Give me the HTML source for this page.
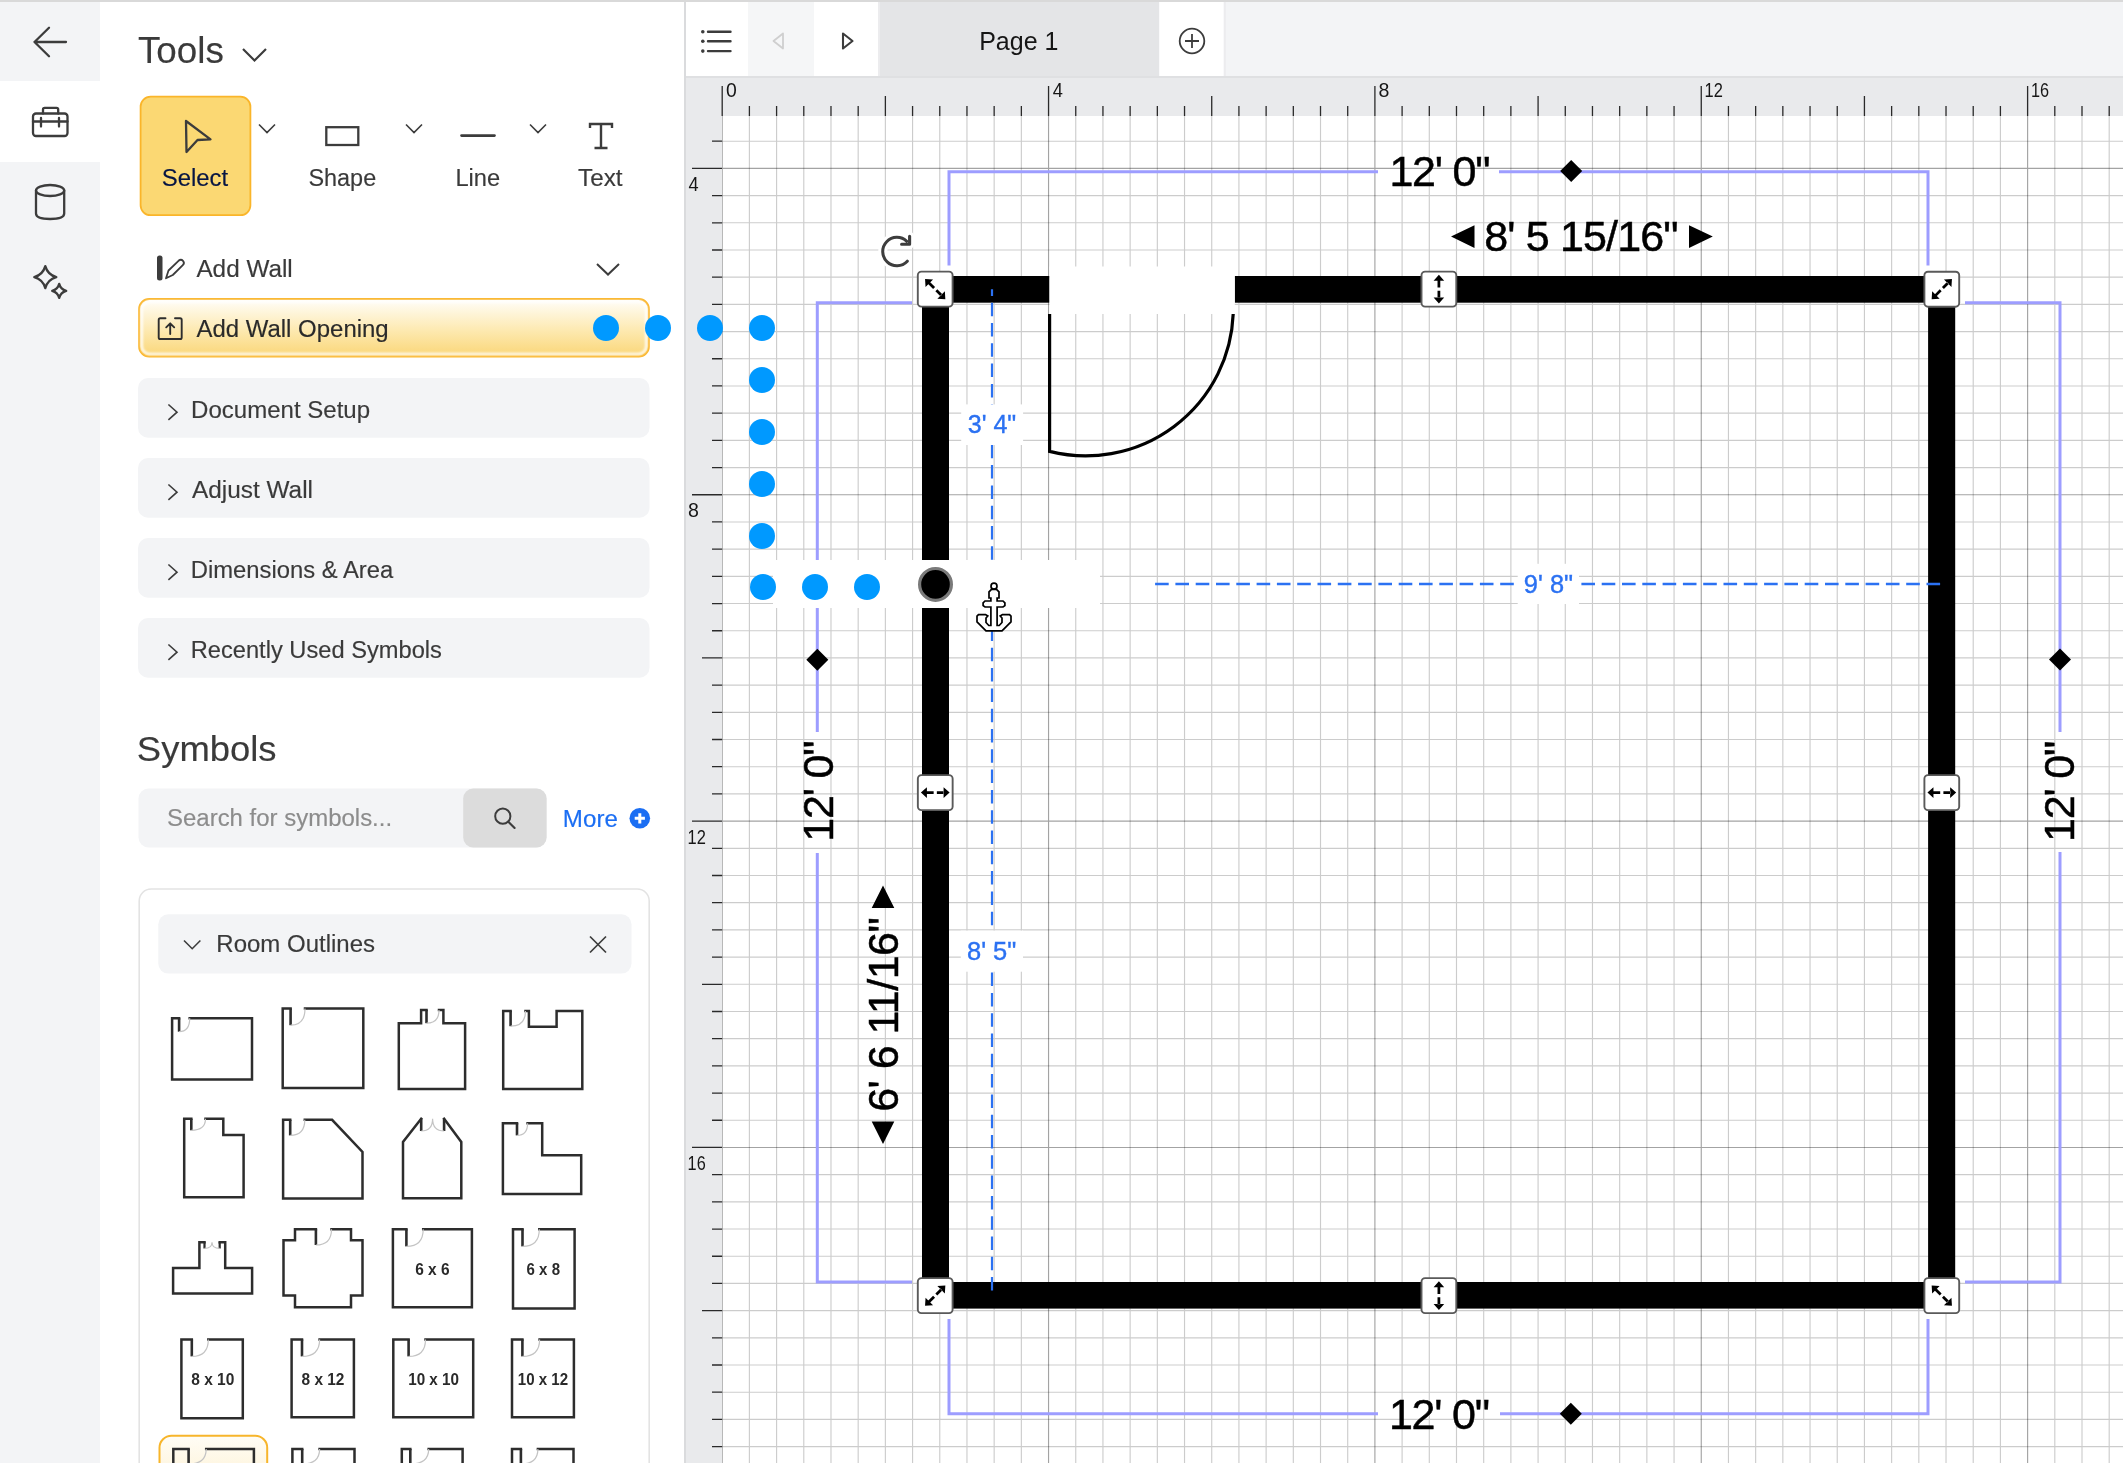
<!DOCTYPE html>
<html><head><meta charset="utf-8"><title>Floor plan editor</title>
<style>
html,body{margin:0;padding:0;background:#fff;overflow:hidden;}
body{width:2123px;height:1463px;position:relative;font-family:"Liberation Sans", sans-serif;}
svg{position:absolute;left:0;top:0;display:block;will-change:transform;}
text{font-family:"Liberation Sans", sans-serif;}
</style></head><body>
<svg width="2123" height="1463" viewBox="0 0 2123 1463">
<defs>
<linearGradient id="gOpen" x1="0" y1="0" x2="0" y2="1">
<stop offset="0" stop-color="#fffefa"/><stop offset="0.55" stop-color="#fde9b0"/><stop offset="1" stop-color="#fad677"/>
</linearGradient>
<linearGradient id="gSel" x1="0" y1="0" x2="0" y2="1">
<stop offset="0" stop-color="#fffdf6"/><stop offset="1" stop-color="#fdebc0"/>
</linearGradient>
<filter id="fBlur" x="-5%" y="-20%" width="110%" height="140%"><feGaussianBlur stdDeviation="1"/></filter>
</defs>

<rect x="686" y="116" width="1437" height="1347" fill="#ffffff"/>
<path d="M749.40 116V1463M776.59 116V1463M803.79 116V1463M830.98 116V1463M858.18 116V1463M885.38 116V1463M912.57 116V1463M939.77 116V1463M966.96 116V1463M994.16 116V1463M1021.36 116V1463M1075.75 116V1463M1102.94 116V1463M1130.14 116V1463M1157.34 116V1463M1184.53 116V1463M1211.73 116V1463M1238.92 116V1463M1266.12 116V1463M1293.32 116V1463M1320.51 116V1463M1347.71 116V1463M1402.10 116V1463M1429.30 116V1463M1456.49 116V1463M1483.69 116V1463M1510.88 116V1463M1538.08 116V1463M1565.28 116V1463M1592.47 116V1463M1619.67 116V1463M1646.86 116V1463M1674.06 116V1463M1728.45 116V1463M1755.65 116V1463M1782.84 116V1463M1810.04 116V1463M1837.24 116V1463M1864.43 116V1463M1891.63 116V1463M1918.82 116V1463M1946.02 116V1463M1973.22 116V1463M2000.41 116V1463M2054.80 116V1463M2082.00 116V1463M2109.20 116V1463M722 141.20H2123M722 195.60H2123M722 222.79H2123M722 249.99H2123M722 277.18H2123M722 304.38H2123M722 331.58H2123M722 358.77H2123M722 385.97H2123M722 413.16H2123M722 440.36H2123M722 467.56H2123M722 521.95H2123M722 549.14H2123M722 576.34H2123M722 603.54H2123M722 630.73H2123M722 657.93H2123M722 685.12H2123M722 712.32H2123M722 739.52H2123M722 766.71H2123M722 793.91H2123M722 848.30H2123M722 875.50H2123M722 902.69H2123M722 929.89H2123M722 957.08H2123M722 984.28H2123M722 1011.48H2123M722 1038.67H2123M722 1065.87H2123M722 1093.06H2123M722 1120.26H2123M722 1174.65H2123M722 1201.85H2123M722 1229.04H2123M722 1256.24H2123M722 1283.44H2123M722 1310.63H2123M722 1337.83H2123M722 1365.02H2123M722 1392.22H2123M722 1419.42H2123M722 1446.61H2123" stroke="rgba(0,0,0,0.2)" stroke-width="1.15" fill="none"/>
<path d="M722.20 116V1463M1048.55 116V1463M1374.90 116V1463M1701.26 116V1463M2027.61 116V1463M722 168.40H2123M722 494.75H2123M722 821.10H2123M722 1147.46H2123" stroke="rgba(0,0,0,0.36)" stroke-width="1.15" fill="none"/>
<rect x="686" y="76" width="1437" height="40" fill="#e9eaec"/>
<rect x="686" y="76" width="36" height="1387" fill="#e9eaec"/>
<rect x="686" y="76" width="1437" height="2" fill="#dfe0e2"/>
<path d="M722.20 86V116M749.40 106V116M776.59 106V116M803.79 106V116M830.98 106V116M858.18 106V116M885.38 96V116M912.57 106V116M939.77 106V116M966.96 106V116M994.16 106V116M1021.36 106V116M1048.55 86V116M1075.75 106V116M1102.94 106V116M1130.14 106V116M1157.34 106V116M1184.53 106V116M1211.73 96V116M1238.92 106V116M1266.12 106V116M1293.32 106V116M1320.51 106V116M1347.71 106V116M1374.90 86V116M1402.10 106V116M1429.30 106V116M1456.49 106V116M1483.69 106V116M1510.88 106V116M1538.08 96V116M1565.28 106V116M1592.47 106V116M1619.67 106V116M1646.86 106V116M1674.06 106V116M1701.26 86V116M1728.45 106V116M1755.65 106V116M1782.84 106V116M1810.04 106V116M1837.24 106V116M1864.43 96V116M1891.63 106V116M1918.82 106V116M1946.02 106V116M1973.22 106V116M2000.41 106V116M2027.61 86V116M2054.80 106V116M2082.00 106V116M2109.20 106V116M712 141.20H722M692 168.40H722M712 195.60H722M712 222.79H722M712 249.99H722M712 277.18H722M712 304.38H722M702 331.58H722M712 358.77H722M712 385.97H722M712 413.16H722M712 440.36H722M712 467.56H722M692 494.75H722M712 521.95H722M712 549.14H722M712 576.34H722M712 603.54H722M712 630.73H722M702 657.93H722M712 685.12H722M712 712.32H722M712 739.52H722M712 766.71H722M712 793.91H722M692 821.10H722M712 848.30H722M712 875.50H722M712 902.69H722M712 929.89H722M712 957.08H722M702 984.28H722M712 1011.48H722M712 1038.67H722M712 1065.87H722M712 1093.06H722M712 1120.26H722M692 1147.46H722M712 1174.65H722M712 1201.85H722M712 1229.04H722M712 1256.24H722M712 1283.44H722M702 1310.63H722M712 1337.83H722M712 1365.02H722M712 1392.22H722M712 1419.42H722M712 1446.61H722" stroke="#2a2a2a" stroke-width="1.3" fill="none"/>
<text x="725.92" y="97.1" font-size="20" fill="#161616" textLength="10.78" lengthAdjust="spacingAndGlyphs">0</text>
<text x="1052.69" y="97.1" font-size="20" fill="#161616" textLength="10.14" lengthAdjust="spacingAndGlyphs">4</text>
<text x="1378.62" y="97.1" font-size="20" fill="#161616" textLength="10.89" lengthAdjust="spacingAndGlyphs">8</text>
<text x="1704.52" y="97.1" font-size="20" fill="#161616" textLength="18.29" lengthAdjust="spacingAndGlyphs">12</text>
<text x="2030.89" y="97.1" font-size="20" fill="#161616" textLength="18.11" lengthAdjust="spacingAndGlyphs">16</text>
<text x="688.44" y="190.9" font-size="20" fill="#161616" textLength="10.14" lengthAdjust="spacingAndGlyphs">4</text>
<text x="688.02" y="517.3" font-size="20" fill="#161616" textLength="10.89" lengthAdjust="spacingAndGlyphs">8</text>
<text x="687.57" y="843.6" font-size="20" fill="#161616" textLength="18.29" lengthAdjust="spacingAndGlyphs">12</text>
<text x="687.58" y="1170.0" font-size="20" fill="#161616" textLength="18.11" lengthAdjust="spacingAndGlyphs">16</text>
<rect x="686" y="0" width="1437" height="76" fill="#f3f4f6"/>
<rect x="686" y="0" width="62" height="76" fill="#ffffff"/>
<rect x="748" y="0" width="66" height="76" fill="#f5f6f7"/>
<rect x="814" y="0" width="64" height="76" fill="#ffffff"/>
<rect x="878" y="0" width="2" height="76" fill="#ececee"/>
<rect x="880" y="0" width="279.3" height="76" fill="#e4e5e7"/>
<rect x="1159.3" y="0" width="64.5" height="76" fill="#ffffff"/>
<rect x="1223.8" y="0" width="2" height="76" fill="#ececee"/>
<g fill="#3c3c3c"><circle cx="702.8" cy="31.7" r="1.8"/><circle cx="702.8" cy="41.3" r="1.8"/><circle cx="702.8" cy="51.1" r="1.8"/></g>
<path d="M708 31.7H730.5M708 41.3H730.5M708 51.1H730.5" stroke="#3c3c3c" stroke-width="2.4" stroke-linecap="round"/>
<path d="M783 33.5L773.5 41L783 48.5Z" fill="none" stroke="#cfcfcf" stroke-width="1.8" stroke-linejoin="round"/>
<path d="M843 33.5L852.5 41L843 48.5Z" fill="none" stroke="#3c3c3c" stroke-width="2.1" stroke-linejoin="round"/>
<text x="979.2" y="50.2" font-size="26.5" fill="#161616" textLength="79.21" lengthAdjust="spacingAndGlyphs">Page 1</text>
<circle cx="1192" cy="41" r="12.3" fill="none" stroke="#3c3c3c" stroke-width="1.8"/>
<path d="M1192 34V48M1185 41H1199" stroke="#3c3c3c" stroke-width="1.8"/>
<rect x="0" y="0" width="2123" height="2" fill="#d9d9d9"/>
<rect x="684" y="2" width="2" height="1463" fill="#dadbdd"/>
<g fill="#000">
<rect x="922" y="276" width="127.5" height="26.7"/>
<rect x="1234.75" y="276" width="720.45" height="26.7"/>
<rect x="922" y="276" width="27" height="284"/>
<rect x="922" y="608" width="27" height="700.6"/>
<rect x="1928.1" y="276" width="27.1" height="1032.6"/>
<rect x="922" y="1282" width="1033.2" height="26.6"/>
</g>
<rect x="1049.5" y="266.5" width="185.25" height="47.5" fill="#fff"/>
<rect x="773" y="560" width="327" height="48" fill="#fff"/>
<path d="M1049.6 314V451.4A147.7 147.7 0 0 0 1233.2 314" fill="none" stroke="#000" stroke-width="3.2"/>
<g fill="none" stroke="#9d9dff" stroke-width="3">
<path d="M949 265.5V171.7H1378M1499 171.7H1928V265.5"/>
<path d="M912 302.7H817.3V560M817.3 608V732M817.3 853V1282H912"/>
<path d="M1965 302.7H2060V732M2060 852V1282H1965"/>
<path d="M949 1319V1413.7H1378M1500 1413.7H1928V1319"/>
</g>
<path d="M1571.2 160.1L1582.2 171.1L1571.2 182.1L1560.2 171.1Z" fill="#000"/>
<path d="M817.3 648.8L828.3 659.8L817.3 670.8L806.3 659.8Z" fill="#000"/>
<path d="M2060 648.6L2071 659.6L2060 670.6L2049 659.6Z" fill="#000"/>
<path d="M1570.8 1402.7L1581.8 1413.7L1570.8 1424.7L1559.8 1413.7Z" fill="#000"/>
<path d="M992 289.3V1291.5" stroke="#2b71f2" stroke-width="2.2" stroke-dasharray="13.5 6.8" stroke-dashoffset="6.9" fill="none"/>
<path d="M1155.1 584H1941.3" stroke="#2b71f2" stroke-width="2.4" stroke-dasharray="13.6 6.7" fill="none"/>
<rect x="960" y="560" width="140" height="48" fill="#fff"/>
<rect x="961.2" y="404.4" width="61.9" height="40.6" fill="#fff"/>
<rect x="960.8" y="930.6" width="62.2" height="41.1" fill="#fff"/>
<rect x="1517.7" y="563.8" width="61.3" height="40.2" fill="#fff"/>
<text x="967.72" y="432.9" font-size="25.6" fill="#2b71f2" stroke="#2b71f2" stroke-width="0.4" textLength="48.51" lengthAdjust="spacingAndGlyphs">3' 4"</text>
<text x="966.98" y="960.2" font-size="25.6" fill="#2b71f2" stroke="#2b71f2" stroke-width="0.4" textLength="49.37" lengthAdjust="spacingAndGlyphs">8' 5"</text>
<text x="1523.86" y="593.0" font-size="25.6" fill="#2b71f2" stroke="#2b71f2" stroke-width="0.4" textLength="49.19" lengthAdjust="spacingAndGlyphs">9' 8"</text>
<g font-size="43" fill="#000" stroke="#000" stroke-width="0.5" text-anchor="middle" lengthAdjust="spacingAndGlyphs">
<text x="1440" y="186" textLength="101.2">12' 0"</text>
<text x="1439.5" y="1428.5" textLength="101.2">12' 0"</text>
<text x="1581.4" y="251.1" textLength="194.3">8' 5 15/16"</text>
<text transform="translate(833.3 791.2) rotate(-90)" textLength="101.2">12' 0"</text>
<text transform="translate(2074.4 791.3) rotate(-90)" textLength="101.2">12' 0"</text>
<text transform="translate(898.2 1014.5) rotate(-90)" textLength="194.6">6' 6 11/16"</text>
</g>
<path d="M1451 236.6L1474.5 225.3V248Z M1689 225.3L1712.8 236.6L1689 248Z M883 885.4L894.3 908H871.7Z M871.7 1121.5H894.3L883 1144Z" fill="#000"/>
<rect x="917.8000000000001" y="271.6" width="34.8" height="35" rx="3.6" fill="#fff" stroke="#5a5a5a" stroke-width="1.9"/>
<g transform="translate(935.2 289.1) rotate(45)"><path d="M-14.35 0L-8.35 -5.3V5.3Z M14.35 0L8.35 -5.3V5.3Z M-8.7 -1.38H-1.6V1.38H-8.7Z M1.6 -1.38H8.7V1.38H1.6Z" fill="#000"/></g>
<rect x="1421.5" y="271.6" width="34.8" height="35" rx="3.6" fill="#fff" stroke="#5a5a5a" stroke-width="1.9"/>
<g transform="translate(1438.9 289.1) rotate(90)"><path d="M-14.35 0L-8.35 -5.3V5.3Z M14.35 0L8.35 -5.3V5.3Z M-8.7 -1.38H-1.6V1.38H-8.7Z M1.6 -1.38H8.7V1.38H1.6Z" fill="#000"/></g>
<rect x="1924.3999999999999" y="271.7" width="34.8" height="35" rx="3.6" fill="#fff" stroke="#5a5a5a" stroke-width="1.9"/>
<g transform="translate(1941.8 289.2) rotate(-45)"><path d="M-14.35 0L-8.35 -5.3V5.3Z M14.35 0L8.35 -5.3V5.3Z M-8.7 -1.38H-1.6V1.38H-8.7Z M1.6 -1.38H8.7V1.38H1.6Z" fill="#000"/></g>
<rect x="917.85" y="775.1" width="34.8" height="35" rx="3.6" fill="#fff" stroke="#5a5a5a" stroke-width="1.9"/>
<g transform="translate(935.25 792.6) rotate(0)"><path d="M-14.35 0L-8.35 -5.3V5.3Z M14.35 0L8.35 -5.3V5.3Z M-8.7 -1.38H-1.6V1.38H-8.7Z M1.6 -1.38H8.7V1.38H1.6Z" fill="#000"/></g>
<rect x="1924.3999999999999" y="775.1" width="34.8" height="35" rx="3.6" fill="#fff" stroke="#5a5a5a" stroke-width="1.9"/>
<g transform="translate(1941.8 792.6) rotate(0)"><path d="M-14.35 0L-8.35 -5.3V5.3Z M14.35 0L8.35 -5.3V5.3Z M-8.7 -1.38H-1.6V1.38H-8.7Z M1.6 -1.38H8.7V1.38H1.6Z" fill="#000"/></g>
<rect x="917.8000000000001" y="1278.1" width="34.8" height="35" rx="3.6" fill="#fff" stroke="#5a5a5a" stroke-width="1.9"/>
<g transform="translate(935.2 1295.6) rotate(-45)"><path d="M-14.35 0L-8.35 -5.3V5.3Z M14.35 0L8.35 -5.3V5.3Z M-8.7 -1.38H-1.6V1.38H-8.7Z M1.6 -1.38H8.7V1.38H1.6Z" fill="#000"/></g>
<rect x="1421.5" y="1278.1" width="34.8" height="35" rx="3.6" fill="#fff" stroke="#5a5a5a" stroke-width="1.9"/>
<g transform="translate(1438.9 1295.6) rotate(90)"><path d="M-14.35 0L-8.35 -5.3V5.3Z M14.35 0L8.35 -5.3V5.3Z M-8.7 -1.38H-1.6V1.38H-8.7Z M1.6 -1.38H8.7V1.38H1.6Z" fill="#000"/></g>
<rect x="1924.3999999999999" y="1278.1" width="34.8" height="35" rx="3.6" fill="#fff" stroke="#5a5a5a" stroke-width="1.9"/>
<g transform="translate(1941.8 1295.6) rotate(45)"><path d="M-14.35 0L-8.35 -5.3V5.3Z M14.35 0L8.35 -5.3V5.3Z M-8.7 -1.38H-1.6V1.38H-8.7Z M1.6 -1.38H8.7V1.38H1.6Z" fill="#000"/></g>
<path d="M907.3 261.2A14.2 14.2 0 1 1 906.8 241.3M909.6 236.2V244.2H901.6" fill="none" stroke="#fff" stroke-width="9" stroke-linecap="round" stroke-linejoin="round"/>
<path d="M907.3 261.2A14.2 14.2 0 1 1 906.8 241.3" fill="none" stroke="#3d3d3d" stroke-width="3" stroke-linecap="round"/>
<path d="M909.6 236.2V244.2H901.6" fill="none" stroke="#3d3d3d" stroke-width="3.1" stroke-linecap="round" stroke-linejoin="round"/>
<g fill="#fff" stroke="#000" stroke-width="1.7" stroke-linejoin="miter">
<circle cx="994" cy="586.2" r="3"/>
<path d="M994 589.3L991.5 589.3L989 591.8L989 598L990.9 598L990.9 601L985 601L983.1 602.9L983.1 605.5L985 607L990.9 607L990.9 625.5L988.8 625.5L986 622.5L986 618L987.8 616L985.5 614.6L978.5 614.6L977 616.2L977 621.8L986 630.8L1002 630.8L1011 621.8L1011 616.2L1009.5 614.6L1002.5 614.6L1000.2 616L1002 618L1002 622.5L999.2 625.5L997.1 625.5L997.1 607L1003 607L1004.9 605.5L1004.9 602.9L1003 601L997.1 601L997.1 598L999 598L999 591.8L996.5 589.3Z"/>
</g>
<rect x="0" y="2" width="100" height="1461" fill="#f3f4f6"/>
<rect x="0" y="81" width="100" height="81" fill="#ffffff"/>
<g fill="none" stroke="#3c3c3c" stroke-width="2.3" stroke-linecap="round" stroke-linejoin="round">
<path d="M34.5 42H66M34.5 42L49 27.8M34.5 42L49 56.2"/>
<rect x="33" y="113.5" width="34.5" height="22.5" rx="3"/><path d="M43 113.5V109.5Q43 107.8 44.7 107.8H56.5Q58.2 107.8 58.2 109.5V113.5M33 121.5H67.5M41 118V126.5M59 118V126.5"/>
<ellipse cx="50.1" cy="190.5" rx="14.1" ry="5.5"/><path d="M36 190.5V213.5Q36 219 50.1 219Q64.2 219 64.2 213.5V190.5"/>
<path d="M45.3 266.1Q47.699999999999996 274.70000000000005 56.3 277.1Q47.699999999999996 279.5 45.3 288.1Q42.9 279.5 34.3 277.1Q42.9 274.70000000000005 45.3 266.1Z"/>
<path d="M59.2 283.9Q60.7 289.4 66.2 290.9Q60.7 292.4 59.2 297.9Q57.7 292.4 52.2 290.9Q57.7 289.4 59.2 283.9Z"/>
</g>
<text x="137.96" y="63" font-size="36.5" fill="#3a3a3a" stroke="#3a3a3a" stroke-width="0.15" textLength="85.91" lengthAdjust="spacingAndGlyphs" >Tools</text>
<path d="M243 49L254.5 60.5L266 49" fill="none" stroke="#3c3c3c" stroke-width="2.2"/>
<rect x="140.6" y="96.6" width="109.8" height="118.6" rx="10" fill="#fbd873" stroke="#fab52a" stroke-width="1.8"/>
<path d="M186 121L210.5 139.3L197.5 140L186.5 152Z" fill="none" stroke="#3c3c3c" stroke-width="2.3" stroke-linejoin="round"/>
<text x="161.72" y="186.2" font-size="23.5" fill="#061443" stroke="#061443" stroke-width="0.15" textLength="66.5" lengthAdjust="spacingAndGlyphs" >Select</text>
<g fill="none" stroke="#3c3c3c" stroke-width="1.6"><path d="M259 124.5L267 132.5L275 124.5M406 124.5L414 132.5L422 124.5M530 124.5L538 132.5L546 124.5"/></g>
<rect x="326.3" y="127.2" width="32" height="17.8" fill="none" stroke="#3c3c3c" stroke-width="2.3"/>
<text x="308.45" y="186.2" font-size="23.5" fill="#3a3a3a" stroke="#3a3a3a" stroke-width="0.15" textLength="67.73" lengthAdjust="spacingAndGlyphs" >Shape</text>
<path d="M461.5 135.6H494.5" stroke="#3c3c3c" stroke-width="2.6" stroke-linecap="round"/>
<text x="455.41" y="186.2" font-size="23.5" fill="#3a3a3a" stroke="#3a3a3a" stroke-width="0.15" textLength="44.76" lengthAdjust="spacingAndGlyphs" >Line</text>
<path d="M590 128V124H612V128M601 124V148M594.5 148H607.5" fill="none" stroke="#3c3c3c" stroke-width="2.4"/>
<text x="578.11" y="186.2" font-size="23.5" fill="#3a3a3a" stroke="#3a3a3a" stroke-width="0.15" textLength="44.5" lengthAdjust="spacingAndGlyphs" >Text</text>
<rect x="157" y="255.5" width="5.5" height="25" rx="2.5" fill="#3c3c3c"/>
<path d="M166 278.3L168.5 270.5L178.5 260.8Q181 258.6 183 260.8Q185 263 182.8 265.2L172.8 275Z" fill="none" stroke="#3c3c3c" stroke-width="1.8" stroke-linejoin="round"/>
<text x="196.4" y="277" font-size="23.5" fill="#3a3a3a" stroke="#3a3a3a" stroke-width="0.15" textLength="96.39" lengthAdjust="spacingAndGlyphs" >Add Wall</text>
<path d="M597 264L608 274.5L619 264" fill="none" stroke="#3c3c3c" stroke-width="2"/>
<rect x="139.2" y="299" width="509.6" height="57.5" rx="10" fill="url(#gOpen)" stroke="#fab52a" stroke-width="2"/>
<rect x="141.7" y="301.5" width="504.6" height="52.5" rx="8" fill="none" stroke="#ffffff" stroke-width="2.6" opacity="0.9" filter="url(#fBlur)"/>
<path d="M165.5 318.2H160.3Q158.7 318.2 158.7 319.8V337.4Q158.7 339 160.3 339H180.1Q181.7 339 181.7 337.4V319.8Q181.7 318.2 180.1 318.2H175M170.2 334V323.5M166.2 327.3L170.2 323.3L174.2 327.3" fill="none" stroke="#2e2e2e" stroke-width="1.9" stroke-linecap="round" stroke-linejoin="round"/>
<text x="196.4" y="337.2" font-size="23.5" fill="#2a2a2a" stroke="#2a2a2a" stroke-width="0.15" textLength="192.31" lengthAdjust="spacingAndGlyphs" >Add Wall Opening</text>
<rect x="138" y="378" width="511.5" height="59.8" rx="10" fill="#f3f4f6"/>
<path d="M168.4 404.5L177 412.2L168.4 419.9" fill="none" stroke="#3c3c3c" stroke-width="1.6"/>
<text x="191.08" y="418.2" font-size="23.5" fill="#3a3a3a" stroke="#3a3a3a" stroke-width="0.15" textLength="178.96" lengthAdjust="spacingAndGlyphs" >Document Setup</text>
<rect x="138" y="458" width="511.5" height="59.8" rx="10" fill="#f3f4f6"/>
<path d="M168.4 484.5L177 492.2L168.4 499.9" fill="none" stroke="#3c3c3c" stroke-width="1.6"/>
<text x="192.0" y="498.2" font-size="23.5" fill="#3a3a3a" stroke="#3a3a3a" stroke-width="0.15" textLength="120.99" lengthAdjust="spacingAndGlyphs" >Adjust Wall</text>
<rect x="138" y="538" width="511.5" height="59.8" rx="10" fill="#f3f4f6"/>
<path d="M168.4 564.5L177 572.2L168.4 579.9" fill="none" stroke="#3c3c3c" stroke-width="1.6"/>
<text x="190.69" y="578.2" font-size="23.5" fill="#3a3a3a" stroke="#3a3a3a" stroke-width="0.15" textLength="202.59" lengthAdjust="spacingAndGlyphs" >Dimensions &amp; Area</text>
<rect x="138" y="618" width="511.5" height="59.8" rx="10" fill="#f3f4f6"/>
<path d="M168.4 644.5L177 652.2L168.4 659.9" fill="none" stroke="#3c3c3c" stroke-width="1.6"/>
<text x="190.71" y="658.2" font-size="23.5" fill="#3a3a3a" stroke="#3a3a3a" stroke-width="0.15" textLength="251.23" lengthAdjust="spacingAndGlyphs" >Recently Used Symbols</text>
<text x="136.86" y="761" font-size="35.5" fill="#3a3a3a" stroke="#3a3a3a" stroke-width="0.15" textLength="139.7" lengthAdjust="spacingAndGlyphs" >Symbols</text>
<rect x="138.5" y="788.5" width="408" height="59" rx="10" fill="#f3f4f6"/>
<rect x="463.2" y="788.5" width="83.4" height="59" rx="10" fill="#dcdcdc"/>
<text x="167.02" y="826" font-size="23.5" fill="#8c8c8c" stroke="#8c8c8c" stroke-width="0.15" textLength="225.07" lengthAdjust="spacingAndGlyphs" >Search for symbols...</text>
<circle cx="502.8" cy="816.2" r="7.6" fill="none" stroke="#3c3c3c" stroke-width="2"/><path d="M508.3 821.7L514.6 828" stroke="#3c3c3c" stroke-width="2.1" stroke-linecap="round"/>
<text x="562.87" y="827.2" font-size="23.5" fill="#1b6ef3" stroke="#1b6ef3" stroke-width="0.15" textLength="54.98" lengthAdjust="spacingAndGlyphs" >More</text>
<circle cx="639.8" cy="818.3" r="10.3" fill="#1b6ef3"/><path d="M639.8 813.2V823.4M634.7 818.3H644.9" stroke="#fff" stroke-width="3"/>
<rect x="139.2" y="889" width="510" height="700" rx="12" fill="#ffffff" stroke="#e3e3e3" stroke-width="1.6"/>
<rect x="158.3" y="914.3" width="473.2" height="59.3" rx="10" fill="#f3f4f6"/>
<path d="M184 940.5L192.2 948.7L200.4 940.5" fill="none" stroke="#3c3c3c" stroke-width="1.6"/>
<text x="216.38" y="952.2" font-size="23.5" fill="#3a3a3a" stroke="#3a3a3a" stroke-width="0.15" textLength="158.63" lengthAdjust="spacingAndGlyphs" >Room Outlines</text>
<path d="M590 936.5L606 952.5M606 936.5L590 952.5" stroke="#3c3c3c" stroke-width="1.7"/>
<path d="M189.7 1018.3H252V1079.6H172.1V1018.3H179.1" fill="none" stroke="#2d2d2d" stroke-width="2.5" stroke-linejoin="miter" stroke-linecap="square"/>
<path d="M179.1 1018.3V1031.7" stroke="#2d2d2d" stroke-width="2.6"/>
<path d="M179.1 1031.7Q189.7 1031.7 189.7 1018.3" fill="none" stroke="#c4c4c4" stroke-width="1.2"/>
<path d="M305 1008.4H363.3V1088H282.7V1008.4H290.6" fill="none" stroke="#2d2d2d" stroke-width="2.5" stroke-linejoin="miter" stroke-linecap="square"/>
<path d="M290.6 1008.4V1025.2" stroke="#2d2d2d" stroke-width="2.6"/>
<path d="M290.6 1025.2Q305 1025.2 305 1008.4" fill="none" stroke="#c4c4c4" stroke-width="1.2"/>
<path d="M439 1009.9H443.4V1023.2H465.1V1089H398.8V1023.2H421.1V1009.9H426.5" fill="none" stroke="#2d2d2d" stroke-width="2.5" stroke-linejoin="miter" stroke-linecap="square"/>
<path d="M426.5 1009.9V1023.2" stroke="#2d2d2d" stroke-width="2.6"/>
<path d="M426.5 1023.2Q439 1023.2 439 1009.9" fill="none" stroke="#c4c4c4" stroke-width="1.2"/>
<path d="M525.5 1010.9H528.9V1026.7H556.6V1010.9H582.3V1089H503.2V1010.9H510.6" fill="none" stroke="#2d2d2d" stroke-width="2.5" stroke-linejoin="miter" stroke-linecap="square"/>
<path d="M510.6 1010.9V1026.2" stroke="#2d2d2d" stroke-width="2.6"/>
<path d="M510.6 1026.2Q525.5 1026.2 525.5 1010.9" fill="none" stroke="#c4c4c4" stroke-width="1.2"/>
<path d="M205.5 1118.8H223.3V1135H243.6V1197.2H184.2V1118.8H191.3" fill="none" stroke="#2d2d2d" stroke-width="2.5" stroke-linejoin="miter" stroke-linecap="square"/>
<path d="M191.3 1118.8V1130.3" stroke="#2d2d2d" stroke-width="2.6"/>
<path d="M191.3 1130.3Q205.5 1130.3 205.5 1118.8" fill="none" stroke="#c4c4c4" stroke-width="1.2"/>
<path d="M304.8 1119.8H332.1L362.5 1152V1198.6H283.1V1119.8H290.2" fill="none" stroke="#2d2d2d" stroke-width="2.5" stroke-linejoin="miter" stroke-linecap="square"/>
<path d="M290.2 1119.8V1135.4" stroke="#2d2d2d" stroke-width="2.6"/>
<path d="M290.2 1135.4Q304.8 1135.4 304.8 1119.8" fill="none" stroke="#c4c4c4" stroke-width="1.2"/>
<path d="M444.1 1118.8L461.3 1142V1198.2H403V1142L421.2 1118.8" fill="none" stroke="#2d2d2d" stroke-width="2.5" stroke-linejoin="miter" stroke-linecap="square"/>
<path d="M421.2 1118.8V1131M444.1 1118.8V1131" stroke="#2d2d2d" stroke-width="2.6"/>
<path d="M421.2 1131Q432.6 1131 432.6 1118.8Q432.6 1131 444.1 1131" fill="none" stroke="#c4c4c4" stroke-width="1.2"/>
<path d="M527.6 1123.2H542.2V1155.2H581.2V1194.1H502.9V1123.2H517" fill="none" stroke="#2d2d2d" stroke-width="2.5" stroke-linejoin="miter" stroke-linecap="square"/>
<path d="M517 1123.2V1135.4" stroke="#2d2d2d" stroke-width="2.6"/>
<path d="M517 1135.4Q527.6 1135.4 527.6 1123.2" fill="none" stroke="#c4c4c4" stroke-width="1.2"/>
<path d="M219.7 1242.3H225.2V1268.1H252.1V1293.6H173.1V1268.1H199.4V1242.3H204.5" fill="none" stroke="#2d2d2d" stroke-width="2.5" stroke-linejoin="miter" stroke-linecap="square"/>
<path d="M204.5 1242.3V1248.4M219.7 1242.3V1248.4" stroke="#2d2d2d" stroke-width="2.2"/>
<path d="M204.5 1248.4Q212 1248.4 212 1242.3Q212 1248.4 219.7 1248.4" fill="none" stroke="#c4c4c4" stroke-width="1.2"/>
<path d="M331.5 1229.2H351V1240.3H362.5V1295.6H351V1307.2H295V1295.6H283.5V1240.3H295V1229.2H315.9" fill="none" stroke="#2d2d2d" stroke-width="2.5" stroke-linejoin="miter" stroke-linecap="square"/>
<path d="M315.9 1229.2V1245" stroke="#2d2d2d" stroke-width="2.6"/>
<path d="M315.9 1245Q331.5 1245 331.5 1229.2" fill="none" stroke="#c4c4c4" stroke-width="1.2"/>
<path d="M423.2 1229.2H471.9V1307.2H392.9V1229.2H406.4" fill="none" stroke="#2d2d2d" stroke-width="2.5" stroke-linejoin="miter" stroke-linecap="square"/>
<path d="M406.4 1229.2V1246.4" stroke="#2d2d2d" stroke-width="2.6"/>
<path d="M406.4 1246.4Q423.2 1246.4 423.2 1229.2" fill="none" stroke="#c4c4c4" stroke-width="1.2"/>
<text x="432.4" y="1274.8" font-size="16.5" font-weight="bold" fill="#2a2a2a" text-anchor="middle" textLength="34.4" lengthAdjust="spacingAndGlyphs">6 x 6</text>
<path d="M539.3 1229.2H574.6V1308.6H513V1229.2H522.5" fill="none" stroke="#2d2d2d" stroke-width="2.5" stroke-linejoin="miter" stroke-linecap="square"/>
<path d="M522.5 1229.2V1246.4" stroke="#2d2d2d" stroke-width="2.6"/>
<path d="M522.5 1246.4Q539.3 1246.4 539.3 1229.2" fill="none" stroke="#c4c4c4" stroke-width="1.2"/>
<text x="543.3" y="1274.8" font-size="16.5" font-weight="bold" fill="#2a2a2a" text-anchor="middle" textLength="33.4" lengthAdjust="spacingAndGlyphs">6 x 8</text>
<path d="M208.3 1339.4H242.8V1418.3H181.4V1339.4H191.8" fill="none" stroke="#2d2d2d" stroke-width="2.5" stroke-linejoin="miter" stroke-linecap="square"/>
<path d="M191.8 1339.4V1356.4" stroke="#2d2d2d" stroke-width="2.6"/>
<path d="M191.8 1356.4Q208.3 1356.4 208.3 1339.4" fill="none" stroke="#c4c4c4" stroke-width="1.2"/>
<text x="212.8" y="1385.4" font-size="16.5" font-weight="bold" fill="#2a2a2a" text-anchor="middle" textLength="43.1" lengthAdjust="spacingAndGlyphs">8 x 10</text>
<path d="M319.6 1339.4H353.9V1417.2H291.6V1339.4H302" fill="none" stroke="#2d2d2d" stroke-width="2.5" stroke-linejoin="miter" stroke-linecap="square"/>
<path d="M302 1339.4V1356.4" stroke="#2d2d2d" stroke-width="2.6"/>
<path d="M302 1356.4Q319.6 1356.4 319.6 1339.4" fill="none" stroke="#c4c4c4" stroke-width="1.2"/>
<text x="323" y="1385.4" font-size="16.5" font-weight="bold" fill="#2a2a2a" text-anchor="middle" textLength="42.9" lengthAdjust="spacingAndGlyphs">8 x 12</text>
<path d="M425.5 1339.4H473.2V1417.2H393.3V1339.4H408.6" fill="none" stroke="#2d2d2d" stroke-width="2.5" stroke-linejoin="miter" stroke-linecap="square"/>
<path d="M408.6 1339.4V1356.4" stroke="#2d2d2d" stroke-width="2.6"/>
<path d="M408.6 1356.4Q425.5 1356.4 425.5 1339.4" fill="none" stroke="#c4c4c4" stroke-width="1.2"/>
<text x="433.6" y="1385.4" font-size="16.5" font-weight="bold" fill="#2a2a2a" text-anchor="middle" textLength="50.8" lengthAdjust="spacingAndGlyphs">10 x 10</text>
<path d="M539.6 1339.4H573.9V1417.2H512V1339.4H522.4" fill="none" stroke="#2d2d2d" stroke-width="2.5" stroke-linejoin="miter" stroke-linecap="square"/>
<path d="M522.4 1339.4V1356.4" stroke="#2d2d2d" stroke-width="2.6"/>
<path d="M522.4 1356.4Q539.6 1356.4 539.6 1339.4" fill="none" stroke="#c4c4c4" stroke-width="1.2"/>
<text x="542.9" y="1385.4" font-size="16.5" font-weight="bold" fill="#2a2a2a" text-anchor="middle" textLength="50.3" lengthAdjust="spacingAndGlyphs">10 x 12</text>
<rect x="159.5" y="1435.8" width="107.7" height="80" rx="12" fill="url(#gSel)" stroke="#f7b52b" stroke-width="2"/>
<path d="M206.2 1449H253.9V1530H173.3V1449H188.6" fill="none" stroke="#2d2d2d" stroke-width="2.5" stroke-linejoin="miter" stroke-linecap="square"/>
<path d="M188.6 1449V1464" stroke="#2d2d2d" stroke-width="2.6"/>
<path d="M188.6 1464Q206.2 1464 206.2 1449" fill="none" stroke="#c4c4c4" stroke-width="1.2"/>
<path d="M319.6 1449H354.5V1530H292.4V1449H302.2" fill="none" stroke="#2d2d2d" stroke-width="2.5" stroke-linejoin="miter" stroke-linecap="square"/>
<path d="M302.2 1449V1464" stroke="#2d2d2d" stroke-width="2.6"/>
<path d="M302.2 1464Q319.6 1464 319.6 1449" fill="none" stroke="#c4c4c4" stroke-width="1.2"/>
<path d="M428.7 1449H462.6V1530H401.8V1449H410.3" fill="none" stroke="#2d2d2d" stroke-width="2.5" stroke-linejoin="miter" stroke-linecap="square"/>
<path d="M410.3 1449V1464" stroke="#2d2d2d" stroke-width="2.6"/>
<path d="M410.3 1464Q428.7 1464 428.7 1449" fill="none" stroke="#c4c4c4" stroke-width="1.2"/>
<path d="M537.9 1449H573.5V1530H512V1449H520.9" fill="none" stroke="#2d2d2d" stroke-width="2.5" stroke-linejoin="miter" stroke-linecap="square"/>
<path d="M520.9 1449V1464" stroke="#2d2d2d" stroke-width="2.6"/>
<path d="M520.9 1464Q537.9 1464 537.9 1449" fill="none" stroke="#c4c4c4" stroke-width="1.2"/>
<circle cx="606" cy="328" r="13" fill="#0099ff"/>
<circle cx="658" cy="328" r="13" fill="#0099ff"/>
<circle cx="710" cy="328" r="13" fill="#0099ff"/>
<circle cx="762" cy="328" r="13" fill="#0099ff"/>
<circle cx="762" cy="380" r="13" fill="#0099ff"/>
<circle cx="762" cy="432" r="13" fill="#0099ff"/>
<circle cx="762" cy="484" r="13" fill="#0099ff"/>
<circle cx="762" cy="536" r="13" fill="#0099ff"/>
<circle cx="763" cy="587" r="13" fill="#0099ff"/>
<circle cx="815" cy="587" r="13" fill="#0099ff"/>
<circle cx="867" cy="587" r="13" fill="#0099ff"/>
<circle cx="935.5" cy="584.4" r="15.9" fill="#000" stroke="#7a7a7a" stroke-width="3.2"/>
</svg></body></html>
